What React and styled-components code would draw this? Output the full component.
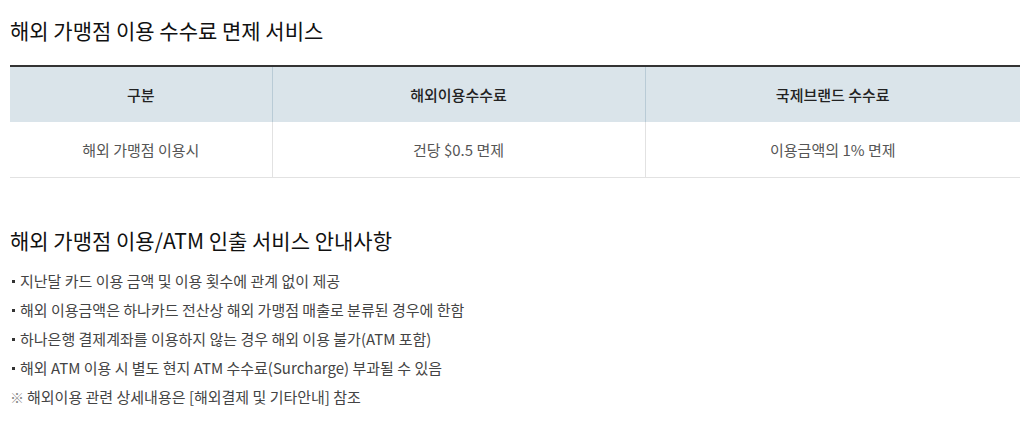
import React from 'react';
import styled, { createGlobalStyle } from 'styled-components';

const GlobalStyle = createGlobalStyle`
  html, body {
    margin: 0;
    padding: 0;
    background: #fff;
  }
  body {
    font-family: 'Noto Sans CJK KR', 'Noto Sans', sans-serif;
    color: #222;
  }
`;

const Page = styled.div`
  padding: 16px 6px 0 10px;
`;

const SectionTitle = styled.h3`
  margin: ${props => (props.second ? '48px 0 12px' : '0 0 21px')};
  font-size: 21px;
  line-height: 28px;
  font-weight: 400;
  color: #111;
`;

const FeeTable = styled.table`
  width: 100%;
  border-collapse: collapse;
  table-layout: fixed;
  border-top: 2px solid #333;
  border-bottom: 1px solid #e2e2e2;
`;

const HeadCell = styled.th`
  height: 55px;
  padding: 0;
  background: #dae4ea;
  font-size: 15px;
  font-weight: 500;
  color: #222;
  text-align: center;
  & + & {
    border-left: 1px solid #b9cbd6;
  }
`;

const BodyCell = styled.td`
  height: 55px;
  padding: 0;
  font-size: 15px;
  color: #555;
  text-align: center;
  & + & {
    border-left: 1px solid #e2e2e2;
  }
`;

const NoticeList = styled.ul`
  margin: 0;
  padding: 0;
  list-style: none;
`;

const NoticeItem = styled.li`
  position: relative;
  padding-left: 10px;
  font-size: 15px;
  line-height: 29px;
  color: #444;
  &::before {
    content: '';
    position: absolute;
    left: 2px;
    top: 14px;
    width: 3px;
    height: 3px;
    background: #333;
  }
`;

const Remark = styled.p`
  margin: 0;
  font-size: 15px;
  line-height: 29px;
  color: #444;
  span {
    display: inline-block;
    width: 17px;
    font-size: 14px;
    color: #888;
  }
`;

const notices = [
  '지난달 카드 이용 금액 및 이용 횟수에 관계 없이 제공',
  '해외 이용금액은 하나카드 전산상 해외 가맹점 매출로 분류된 경우에 한함',
  '하나은행 결제계좌를 이용하지 않는 경우 해외 이용 불가(ATM 포함)',
  '해외 ATM 이용 시 별도 현지 ATM 수수료(Surcharge) 부과될 수 있음',
];

export default function App() {
  return (
    <Page>
      <GlobalStyle />
      <SectionTitle>해외 가맹점 이용 수수료 면제 서비스</SectionTitle>
      <FeeTable>
        <colgroup>
          <col style={{ width: '262px' }} />
          <col style={{ width: '373px' }} />
          <col />
        </colgroup>
        <thead>
          <tr>
            <HeadCell>구분</HeadCell>
            <HeadCell>해외이용수수료</HeadCell>
            <HeadCell>국제브랜드 수수료</HeadCell>
          </tr>
        </thead>
        <tbody>
          <tr>
            <BodyCell>해외 가맹점 이용시</BodyCell>
            <BodyCell>건당 $0.5 면제</BodyCell>
            <BodyCell>이용금액의 1% 면제</BodyCell>
          </tr>
        </tbody>
      </FeeTable>

      <SectionTitle second>해외 가맹점 이용/ATM 인출 서비스 안내사항</SectionTitle>
      <NoticeList>
        {notices.map((text, i) => (
          <NoticeItem key={'notice' + i}>{text}</NoticeItem>
        ))}
      </NoticeList>
      <Remark>
        <span>※</span>해외이용 관련 상세내용은 [해외결제 및 기타안내] 참조
      </Remark>
    </Page>
  );
}
